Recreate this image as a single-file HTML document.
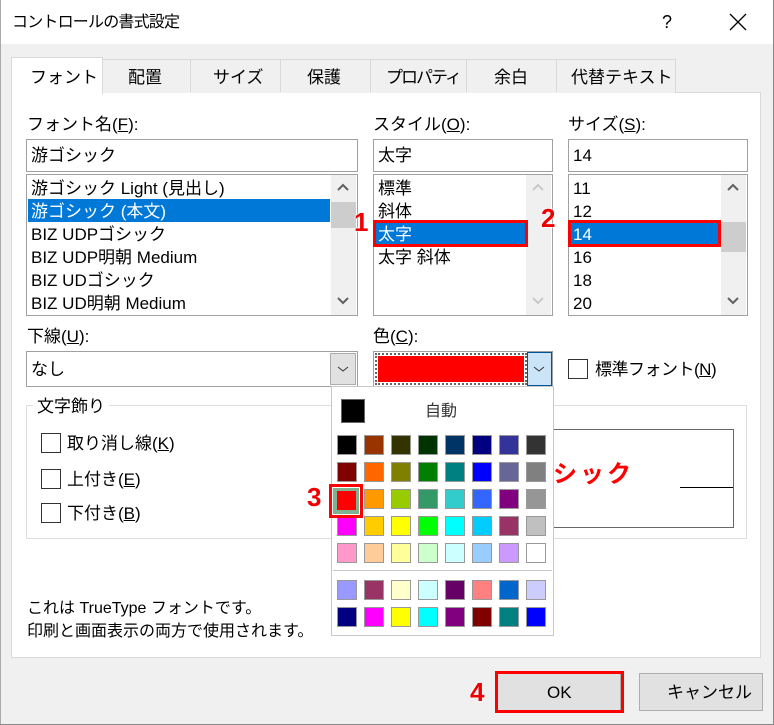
<!DOCTYPE html>
<html><head><meta charset="utf-8"><style>
*{box-sizing:border-box;margin:0;padding:0}
body{width:774px;height:725px;background:#f0f0f0;position:relative;overflow:hidden;font-family:"Liberation Sans","Noto Sans CJK JP",sans-serif;font-size:17px;color:#000}
.a{position:absolute}
.t{position:absolute;white-space:nowrap;line-height:23px}
.box{position:absolute;background:#fff;border:1px solid #a0a0a0}
.sel{background:#0078d7;color:#fff}
.sb{position:absolute;background:#f0f0f0}
.chk{position:absolute;width:20px;height:20px;border:1px solid #333;background:#fff}
.red{border:3px solid #f00;position:absolute}
.num{position:absolute;color:#e00;font-weight:bold;font-size:26px;line-height:26px;text-shadow:0 0 2px #fff,0 0 2px #fff}
.c{position:absolute;width:20px;height:20px;border:1px solid #999}
u{text-decoration:underline}
</style></head><body>
<div class="a" style="left:0;top:0;width:774px;height:44px;background:#fff"></div>
<div class="t" style="left:12px;top:11px;font-size:16px;letter-spacing:-0.8px">コントロールの書式設定</div>
<div class="t" style="left:662px;top:11px;font-size:18px">?</div>
<svg class="a" style="left:729px;top:13px" width="18" height="18"><path d="M1 1L17 17M17 1L1 17" stroke="#000" stroke-width="1.3"/></svg>
<div class="a" style="right:0;top:0;width:1px;height:725px;background:#888"></div>
<div class="a" style="left:0;top:0;width:1px;height:725px;background:#aaa"></div>
<div class="a" style="left:0;bottom:0;width:774px;height:1px;background:#888"></div>
<div class="a" style="left:11px;top:92px;width:750px;height:566px;background:#fff;border:1px solid #d9d9d9"></div>
<div class="a" style="left:102px;top:59px;width:574px;height:34px;background:#f0f0f0;border:1px solid #d9d9d9;border-bottom:none"></div>
<div class="a" style="left:190px;top:59px;width:1px;height:33px;background:#d9d9d9"></div>
<div class="a" style="left:280px;top:59px;width:1px;height:33px;background:#d9d9d9"></div>
<div class="a" style="left:370px;top:59px;width:1px;height:33px;background:#d9d9d9"></div>
<div class="a" style="left:466px;top:59px;width:1px;height:33px;background:#d9d9d9"></div>
<div class="a" style="left:556px;top:59px;width:1px;height:33px;background:#d9d9d9"></div>
<div class="a" style="left:11px;top:57px;width:92px;height:37px;background:#fff;border:1px solid #d9d9d9;border-bottom:none"></div>
<div class="t" style="left:30px;top:66px">フォント</div>
<div class="t" style="left:128px;top:66px">配置</div>
<div class="t" style="left:213px;top:66px">サイズ</div>
<div class="t" style="left:307px;top:66px">保護</div>
<div class="t" style="left:386px;top:66px;letter-spacing:-2px">プロパティ</div>
<div class="t" style="left:494px;top:66px">余白</div>
<div class="t" style="left:571px;top:66px">代替テキスト</div>
<div class="t" style="left:27px;top:113px">フォント名(<u>F</u>):</div>
<div class="t" style="left:373px;top:113px">スタイル(<u>O</u>):</div>
<div class="t" style="left:568px;top:113px">サイズ(<u>S</u>):</div>
<div class="box" style="left:26px;top:139px;width:332px;height:33px"></div>
<div class="t" style="left:31px;top:144px">游ゴシック</div>
<div class="box" style="left:373px;top:139px;width:180px;height:33px"></div>
<div class="t" style="left:378px;top:144px">太字</div>
<div class="box" style="left:568px;top:139px;width:180px;height:33px"></div>
<div class="t" style="left:573px;top:144px">14</div>
<div class="box" style="left:26px;top:174px;width:332px;height:142px"></div>
<div class="a sel" style="left:28px;top:199px;width:302px;height:23px"></div>
<div class="t" style="left:31px;top:177px">游ゴシック Light (見出し)</div>
<div class="t" style="left:31px;top:200px;color:#fff">游ゴシック (本文)</div>
<div class="t" style="left:31px;top:223px">BIZ UDPゴシック</div>
<div class="t" style="left:31px;top:246px">BIZ UDP明朝 Medium</div>
<div class="t" style="left:31px;top:269px">BIZ UDゴシック</div>
<div class="t" style="left:31px;top:292px">BIZ UD明朝 Medium</div>
<div class="sb" style="left:331px;top:175px;width:25px;height:140px"></div>
<div class="a" style="left:331px;top:202px;width:25px;height:26px;background:#cdcdcd"></div>
<svg class="a" style="left:336px;top:183px" width="14" height="10"><path d="M2 7L7 2L12 7" fill="none" stroke="#606060" stroke-width="2"/></svg>
<svg class="a" style="left:336px;top:295px" width="14" height="10"><path d="M2 3L7 8L12 3" fill="none" stroke="#606060" stroke-width="2"/></svg>
<div class="box" style="left:373px;top:174px;width:180px;height:142px"></div>
<div class="a sel" style="left:375px;top:222px;width:152px;height:23px"></div>
<div class="t" style="left:378px;top:177px">標準</div>
<div class="t" style="left:378px;top:200px">斜体</div>
<div class="t" style="left:378px;top:223px;color:#fff">太字</div>
<div class="t" style="left:378px;top:246px">太字 斜体</div>
<div class="sb" style="left:526px;top:175px;width:25px;height:140px"></div>
<svg class="a" style="left:531px;top:183px" width="14" height="10"><path d="M2 7L7 2L12 7" fill="none" stroke="#c8c8c8" stroke-width="2"/></svg>
<svg class="a" style="left:531px;top:295px" width="14" height="10"><path d="M2 3L7 8L12 3" fill="none" stroke="#c8c8c8" stroke-width="2"/></svg>
<div class="red" style="left:373px;top:220px;width:155px;height:27px"></div>
<div class="num" style="left:354px;top:209px">1</div>
<div class="box" style="left:568px;top:174px;width:180px;height:142px"></div>
<div class="a sel" style="left:570px;top:222px;width:152px;height:23px"></div>
<div class="t" style="left:573px;top:177px">11</div>
<div class="t" style="left:573px;top:200px">12</div>
<div class="t" style="left:573px;top:223px;color:#fff">14</div>
<div class="t" style="left:573px;top:246px">16</div>
<div class="t" style="left:573px;top:269px">18</div>
<div class="t" style="left:573px;top:292px">20</div>
<div class="sb" style="left:721px;top:175px;width:25px;height:140px"></div>
<div class="a" style="left:721px;top:222px;width:25px;height:30px;background:#cdcdcd"></div>
<svg class="a" style="left:726px;top:183px" width="14" height="10"><path d="M2 7L7 2L12 7" fill="none" stroke="#606060" stroke-width="2"/></svg>
<svg class="a" style="left:726px;top:295px" width="14" height="10"><path d="M2 3L7 8L12 3" fill="none" stroke="#606060" stroke-width="2"/></svg>
<div class="red" style="left:568px;top:220px;width:153px;height:27px"></div>
<div class="num" style="left:541px;top:205px">2</div>
<div class="t" style="left:27px;top:325px">下線(<u>U</u>):</div>
<div class="box" style="left:26px;top:351px;width:332px;height:36px;border-color:#a0a0a0"></div>
<div class="t" style="left:31px;top:358px">なし</div>
<div class="a" style="left:330px;top:353px;width:26px;height:32px;background:#e1e1e1;border:1px solid #adadad"></div>
<svg class="a" style="left:337px;top:365px" width="12" height="8"><path d="M1 2L6 6L11 2" fill="none" stroke="#333" stroke-width="1"/></svg>
<div class="t" style="left:373px;top:325px">色(<u>C</u>):</div>
<div class="box" style="left:373px;top:351px;width:180px;height:36px;border-color:#a0a0a0"></div>
<div class="a" style="left:375px;top:353px;width:152px;height:32px;background:#fff;border:2px dotted #666"></div>
<div class="a" style="left:378px;top:356px;width:146px;height:26px;background:#f00;border:1px solid #f00"></div>
<div class="a" style="left:527px;top:352px;width:25px;height:34px;background:#cce4f7;border:1px solid #005499"></div>
<svg class="a" style="left:533px;top:365px" width="12" height="8"><path d="M1 2L6 6L11 2" fill="none" stroke="#333" stroke-width="1"/></svg>
<div class="chk" style="left:568px;top:359px"></div>
<div class="t" style="left:595px;top:358px;letter-spacing:-0.5px">標準フォント(<u>N</u>)</div>
<div class="a" style="left:26px;top:405px;width:306px;height:134px;border:1px solid #dcdcdc;border-right:none"></div>
<div class="a" style="left:553px;top:405px;width:194px;height:134px;border:1px solid #dcdcdc;border-left:none"></div>
<div class="t" style="left:33px;top:395px;background:#fff;padding:0 4px">文字飾り</div>
<div class="chk" style="left:41px;top:433px"></div>
<div class="t" style="left:67px;top:432px">取り消し線(<u>K</u>)</div>
<div class="chk" style="left:41px;top:469px"></div>
<div class="t" style="left:67px;top:468px">上付き(<u>E</u>)</div>
<div class="chk" style="left:41px;top:503px"></div>
<div class="t" style="left:67px;top:502px">下付き(<u>B</u>)</div>
<div class="a" style="left:552px;top:429px;width:182px;height:99px;border:1px solid #666;border-left:none;background:#fff"></div>
<div class="a" style="left:680px;top:487px;width:53px;height:1px;background:#000"></div>
<div class="t" style="left:553px;top:460px;color:#f00;font-weight:bold;font-size:24px;line-height:30px;letter-spacing:3px">シック</div>
<div class="t" style="left:27px;top:597px;font-size:16px">これは TrueType フォントです。</div>
<div class="t" style="left:27px;top:620px;font-size:16px">印刷と画面表示の両方で使用されます。</div>
<div class="a" style="left:331px;top:386px;width:223px;height:250px;background:#fff;border:1px solid #c8c8c8"></div>
<div class="a" style="left:341px;top:399px;width:24px;height:24px;background:#000;border:1px solid #666"></div>
<div class="t" style="left:425px;top:400px;color:#333;font-size:16px">自動</div>
<div class="a" style="left:333px;top:570px;width:219px;height:1px;background:#c8c8c8"></div>
<div id="g"></div>
<div class="num" style="left:307px;top:484px">3</div>
<div class="red" style="left:329px;top:484px;width:34px;height:34px;border-width:3px"></div>
<div class="a" style="left:333px;top:488px;width:26px;height:26px;background:#7fb08f"></div>
<div class="a" style="left:337px;top:491px;width:19px;height:19px;background:#f00"></div>
<div class="a" style="left:497px;top:673px;width:124px;height:38px;background:#e1e1e1;border:1px solid #adadad"></div>
<div class="red" style="left:495px;top:671px;width:129px;height:42px"></div>
<div class="t" style="left:547px;top:681px">OK</div>
<div class="a" style="left:639px;top:673px;width:124px;height:38px;background:#e1e1e1;border:1px solid #adadad"></div>
<div class="t" style="left:667px;top:681px">キャンセル</div>
<div class="num" style="left:470px;top:679px">4</div>
<script>
var rows=[["#000","#993300","#333300","#003300","#003366","#000080","#333399","#333333"],
["#800000","#ff6600","#808000","#008000","#008080","#0000ff","#666699","#808080"],
["#ff0000","#ff9900","#99cc00","#339966","#33cccc","#3366ff","#800080","#969696"],
["#ff00ff","#ffcc00","#ffff00","#00ff00","#00ffff","#00ccff","#993366","#c0c0c0"],
["#ff99cc","#ffcc99","#ffff99","#ccffcc","#ccffff","#99ccff","#cc99ff","#ffffff"],
["#9999ff","#993366","#ffffcc","#ccffff","#660066","#ff8080","#0066cc","#ccccff"],
["#000080","#ff00ff","#ffff00","#00ffff","#800080","#800000","#008080","#0000ff"]];
var ys=[435,462,489,516,543,580,607],h="";
rows.forEach(function(r,i){r.forEach(function(c,j){h+='<div class="c" style="left:'+(337+j*27)+'px;top:'+ys[i]+'px;background:'+c+'"></div>'})});
document.getElementById("g").outerHTML=h;
</script>
</body></html>
